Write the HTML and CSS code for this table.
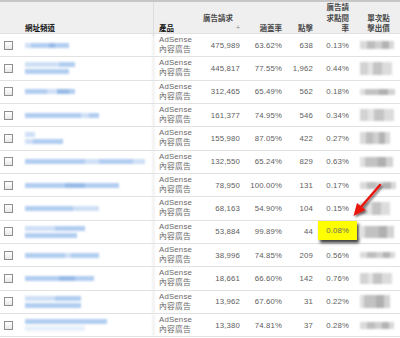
FILE: index.html
```html
<!DOCTYPE html>
<html lang="zh-Hant">
<head>
<meta charset="utf-8">
<link rel="stylesheet" href="styles.css">
</head>
<body>
<div class="report">
  <div class="head">
    <div class="c"></div>
    <div class="c c-url"><span>網址頻道</span></div>
    <div class="c c-prod"><span>產品</span></div>
    <div class="c c-num c-sort"><span class="pad">廣告請求</span><span class="sort">+</span></div>
    <div class="c c-num"><span>涵蓋率</span></div>
    <div class="c c-num"><span>點擊</span></div>
    <div class="c c-num c-ctr"><span>廣告請</span><span>求點閱</span><span>率</span></div>
    <div class="c c-cpc"><span>單次點</span><span>擊出價</span></div>
  </div>

  <div class="row">
    <div class="chk"><span class="box"></span></div>
    <div class="url"><div class="line"><span class="l" style="width:6px"></span><span class="m" style="width:18px"></span><span class="d" style="width:6px"></span><span class="m" style="width:14px"></span></div></div>
    <div class="prod">AdSense<br>內容廣告</div>
    <div class="num">475,989</div><div class="num">63.62%</div><div class="num">638</div><div class="num ctr">0.13%</div>
    <div class="cpc"><span class="g" style="width:34px;height:8px"></span></div>
  </div>

  <div class="row">
    <div class="chk"><span class="box"></span></div>
    <div class="url"><div class="line"><span class="l" style="width:34px"></span><span class="m" style="width:16px"></span></div><div class="line"><span class="m" style="width:44px"></span></div></div>
    <div class="prod">AdSense<br>內容廣告</div>
    <div class="num">445,817</div><div class="num">77.55%</div><div class="num">1,962</div><div class="num ctr">0.44%</div>
    <div class="cpc"><span class="g g2" style="width:32px;height:13px"></span></div>
  </div>

  <div class="row">
    <div class="chk"><span class="box"></span></div>
    <div class="url"><div class="line"><span class="m" style="width:22px"></span><span class="l" style="width:10px"></span><span class="d" style="width:12px"></span><span class="m" style="width:6px"></span></div></div>
    <div class="prod">AdSense<br>內容廣告</div>
    <div class="num">312,465</div><div class="num">65.49%</div><div class="num">562</div><div class="num ctr">0.18%</div>
    <div class="cpc"><span class="g g3" style="width:35px;height:6px"></span></div>
  </div>

  <div class="row">
    <div class="chk"><span class="box"></span></div>
    <div class="url"><div class="line"><span class="m" style="width:56px"></span><span class="l" style="width:8px"></span><span class="m" style="width:10px"></span></div></div>
    <div class="prod">AdSense<br>內容廣告</div>
    <div class="num">161,377</div><div class="num">74.95%</div><div class="num">546</div><div class="num ctr">0.34%</div>
    <div class="cpc"><span class="g g2" style="width:34px;height:12px"></span></div>
  </div>

  <div class="row">
    <div class="chk"><span class="box"></span></div>
    <div class="url"><div class="line"><span class="l" style="width:10px"></span></div><div class="line"><span class="l" style="width:8px"></span><span class="m" style="width:30px"></span></div></div>
    <div class="prod">AdSense<br>內容廣告</div>
    <div class="num">155,980</div><div class="num">87.05%</div><div class="num">422</div><div class="num ctr">0.27%</div>
    <div class="cpc"><span class="g" style="width:30px;height:12px"></span></div>
  </div>

  <div class="row">
    <div class="chk"><span class="box"></span></div>
    <div class="url"><div class="line"><span class="m" style="width:60px"></span><span class="l" style="width:14px"></span><span class="m" style="width:34px"></span><span class="l" style="width:12px"></span></div></div>
    <div class="prod">AdSense<br>內容廣告</div>
    <div class="num">132,550</div><div class="num">65.24%</div><div class="num">829</div><div class="num ctr">0.63%</div>
    <div class="cpc"><span class="g g3" style="width:33px;height:10px"></span></div>
  </div>

  <div class="row">
    <div class="chk"><span class="box"></span></div>
    <div class="url"><div class="line"><span class="m" style="width:40px"></span><span class="d" style="width:20px"></span><span class="m" style="width:34px"></span></div></div>
    <div class="prod">AdSense<br>內容廣告</div>
    <div class="num">78,950</div><div class="num">100.00%</div><div class="num">131</div><div class="num ctr">0.17%</div>
    <div class="cpc"><span class="g" style="width:36px;height:7px"></span></div>
  </div>

  <div class="row">
    <div class="chk"><span class="box"></span></div>
    <div class="url"><div class="line"><span class="m" style="width:48px"></span><span class="l" style="width:26px"></span></div></div>
    <div class="prod">AdSense<br>內容廣告</div>
    <div class="num">68,163</div><div class="num">54.90%</div><div class="num">104</div><div class="num ctr">0.15%</div>
    <div class="cpc"><span class="g g2" style="width:30px;height:13px"></span></div>
  </div>

  <div class="row">
    <div class="chk"><span class="box"></span></div>
    <div class="url"><div class="line"><span class="l" style="width:30px"></span><span class="m" style="width:30px"></span></div><div class="line"><span class="m" style="width:52px"></span></div></div>
    <div class="prod">AdSense<br>內容廣告</div>
    <div class="num">53,884</div><div class="num">99.89%</div><div class="num">44</div><div class="num ctr hl">0.08%</div>
    <div class="cpc"><span class="g g3" style="width:34px;height:12px"></span></div>
  </div>

  <div class="row">
    <div class="chk"><span class="box"></span></div>
    <div class="url"><div class="line"><span class="m" style="width:40px"></span><span class="l" style="width:6px"></span><span class="m" style="width:28px"></span></div></div>
    <div class="prod">AdSense<br>內容廣告</div>
    <div class="num">38,996</div><div class="num">74.85%</div><div class="num">209</div><div class="num ctr">0.56%</div>
    <div class="cpc"><span class="g" style="width:35px;height:6px"></span></div>
  </div>

  <div class="row">
    <div class="chk"><span class="box"></span></div>
    <div class="url"><div class="line"><span class="m" style="width:34px"></span><span class="d" style="width:16px"></span><span class="m" style="width:19px"></span></div></div>
    <div class="prod">AdSense<br>內容廣告</div>
    <div class="num">18,661</div><div class="num">66.60%</div><div class="num">142</div><div class="num ctr">0.76%</div>
    <div class="cpc"><span class="g g2" style="width:32px;height:11px"></span></div>
  </div>

  <div class="row">
    <div class="chk"><span class="box"></span></div>
    <div class="url"><div class="line"><span class="l" style="width:30px"></span><span class="m" style="width:26px"></span></div><div class="line"><span class="m" style="width:56px"></span></div></div>
    <div class="prod">AdSense<br>內容廣告</div>
    <div class="num">13,962</div><div class="num">67.60%</div><div class="num">31</div><div class="num ctr">0.22%</div>
    <div class="cpc"><span class="g g3" style="width:30px;height:13px"></span></div>
  </div>

  <div class="row last">
    <div class="chk"><span class="box"></span></div>
    <div class="url"><div class="line"><span class="m" style="width:82px"></span></div><div class="line faint"><span class="l" style="width:60px"></span></div></div>
    <div class="prod">AdSense<br>內容廣告</div>
    <div class="num">13,380</div><div class="num">74.81%</div><div class="num">37</div><div class="num ctr">0.28%</div>
    <div class="cpc"><span class="g" style="width:34px;height:7px"></span></div>
  </div>

  <svg class="arrow" width="400" height="338" viewBox="0 0 400 338">
    <defs>
      <filter id="sh" x="-50%" y="-50%" width="200%" height="200%">
        <feDropShadow dx="1.5" dy="1.5" stdDeviation="1" flood-color="#000" flood-opacity="0.6"/>
      </filter>
    </defs>
    <g filter="url(#sh)">
      <line x1="380" y1="185" x2="361" y2="207" stroke="#e8140e" stroke-width="2.4" stroke-linecap="round"/>
      <polygon points="353.5,216 357,203 365.5,210" fill="#e8140e"/>
    </g>
  </svg>
</div>
</body>
</html>
```
FILE: styles.css
```css
body {
  margin: 0;
  background: #fff;
  font-family: "Liberation Sans", "Noto Sans CJK TC", Arial, sans-serif;
}

.report {
  position: relative;
  width: 400px;
  height: 338px;
  overflow: hidden;
}

.head,
.row {
  display: grid;
  grid-template-columns: 20px 134px 46px 45px 42px 31px 39px 43px;
  box-sizing: border-box;
}

.head {
  height: 33px;
  border-top: 2px solid #c6c6c6;
  background: #efefef;
}

.head .c {
  display: flex;
  flex-direction: column;
  justify-content: flex-end;
  padding-bottom: 2px;
  font-family: "Noto Sans CJK TC", sans-serif;
  font-weight: bold;
  font-size: 7.5px;
  line-height: 10.5px;
  color: #4a4a4a;
}

.head .c-url {
  border-right: 1px solid #dcdcdc;
  padding-left: 5px;
  color: #111;
}

.head .c-prod {
  padding-left: 5px;
  color: #111;
}

.head .c-num {
  align-items: flex-end;
  padding-right: 5px;
}

.head .c-sort .pad {
  padding-right: 7px;
}

.head .c-sort .sort {
  font-family: "Liberation Sans", sans-serif;
  font-weight: normal;
  color: #888;
  font-size: 7px;
}

.head .c-ctr {
  padding-right: 8px;
}

.head .c-cpc {
  align-items: center;
}

.row {
  height: 23.33px;
  border-top: 1px solid #e2e2e2;
}

.row.last {
  border-bottom: 1px solid #e2e2e2;
  height: 24.33px;
}

.chk {
  display: flex;
  align-items: center;
  padding-left: 4px;
}

.box {
  width: 9px;
  height: 9px;
  box-sizing: border-box;
  border: 1px solid #8e8e8e;
  background: linear-gradient(#fff, #e8e8e8);
}

.url {
  border-right: 1px solid #dcdcdc;
  padding-left: 5px;
  display: flex;
  flex-direction: column;
  justify-content: center;
  gap: 2px;
  filter: blur(1px);
}

.line {
  display: flex;
  height: 5px;
}

.line.faint {
  opacity: 0.5;
}

.line span {
  display: block;
  height: 100%;
}

.l { background: #cfe0f6; }
.m { background: #b1cdf0; }
.d { background: #98bbe8; }

.prod {
  padding-left: 5px;
  display: flex;
  align-items: center;
  font-size: 7.8px;
  line-height: 10px;
  letter-spacing: 0.2px;
  color: #6a6a6a;
}

.num {
  display: flex;
  align-items: center;
  justify-content: flex-end;
  padding-right: 5px;
  font-size: 7.8px;
  letter-spacing: 0.15px;
  color: #606060;
}

.num.ctr {
  padding-right: 8px;
}

.num.hl {
  background: #ffff00;
  color: #666;
  margin-bottom: 3px;
  box-shadow: 2px 3px 3px rgba(0, 0, 0, 0.75);
  position: relative;
}

.cpc {
  display: flex;
  align-items: center;
  padding-left: 3px;
}

.g {
  display: block;
  filter: blur(0.9px);
  background: linear-gradient(90deg, #dadada 0 20%, #bdbdbd 20% 45%, #cfcfcf 45% 65%, #b3b3b3 65% 85%, #d8d8d8 85%);
}

.g2 {
  background: linear-gradient(90deg, #d3d3d3 0 25%, #e4e4e4 25% 40%, #c4c4c4 40% 70%, #dcdcdc 70%);
}

.g3 {
  background: linear-gradient(90deg, #e0e0e0 0 15%, #c2c2c2 15% 55%, #b0b0b0 55% 80%, #d2d2d2 80%);
}

.arrow {
  position: absolute;
  top: 0;
  left: 0;
  pointer-events: none;
}
```
